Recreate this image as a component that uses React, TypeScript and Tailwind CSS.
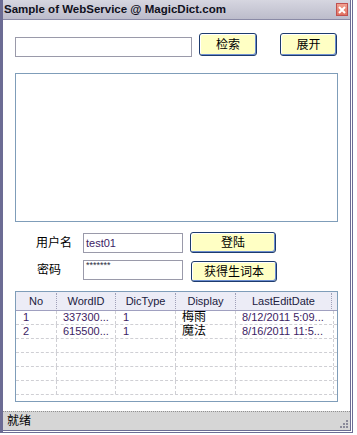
import React from 'react';

const font = { fontFamily: '"Liberation Sans", "Noto Sans CJK SC", sans-serif' };

const rows = [
  { no: '1', id: '337300...', type: '1', display: '梅雨', date: '8/12/2011 5:09...' },
  { no: '2', id: '615500...', type: '1', display: '魔法', date: '8/16/2011 11:5...' },
  null,
  null,
  null,
  null,
];

function XpButton({ children, className }: { children: React.ReactNode; className: string }) {
  return (
    <button
      className={`flex items-center justify-center rounded-[3px] border border-[#1d3b6e] bg-[#ffffc4] text-[12px] text-black shadow-[inset_-1px_-1px_0_#6f8fd0,inset_1px_1px_0_#ffffff] ${className}`}
    >
      {children}
    </button>
  );
}

export default function App() {
  return (
    <div className="h-[435px] w-[357px] bg-white" style={font}>
      <div className="flex h-[433px] w-[353px] flex-col border-b border-l-[3px] border-r border-[#6c6c94] pb-px pr-px">
        <div className="flex h-full flex-col border-b border-r border-[#6c6c94]">
          {/* title bar */}
          <div className="flex h-[20px] shrink-0 items-center justify-between border-b border-[#8a8aa6] bg-gradient-to-b from-[#d6d6e0] to-[#bcbccb] pr-[2px]">
            <span className="pl-[1px] text-[11.5px] font-bold leading-none text-[#101020]">
              Sample of WebService @ MagicDict.com
            </span>
            <div className="flex h-[13px] w-[12px] items-center justify-center border border-[#c05050] bg-gradient-to-b from-[#f0a090] to-[#e07060]">
              <svg width="8" height="8" viewBox="0 0 8 8">
                <path d="M1 1L7 7M7 1L1 7" stroke="white" strokeWidth="2" />
              </svg>
            </div>
          </div>

          {/* body */}
          <div className="flex flex-1 flex-col pl-[12px]">
            <div className="mt-[13px] flex items-start">
              <div className="mt-[4px] h-[20px] w-[177px] border border-[#9a9aaa] bg-white" />
              <XpButton className="ml-[7px] h-[23px] w-[58px]">检索</XpButton>
              <XpButton className="ml-[23px] h-[23px] w-[57px]">展开</XpButton>
            </div>

            <div className="mt-[16px] h-[149px] w-[323px] border border-[#7f9db9] bg-white" />

            <div className="mt-[10px] flex items-center">
              <span className="ml-[21px] w-[47px] text-[12px] leading-none text-black">用户名</span>
              <div className="h-[20px] w-[100px] border border-[#9a9aaa] pl-[2px] text-[11px] leading-[18px] text-[#3c1c64]">
                test01
              </div>
              <XpButton className="ml-[7px] h-[21px] w-[86px]">登陆</XpButton>
            </div>

            <div className="mt-[5px] flex items-center">
              <span className="ml-[22px] w-[46px] text-[12px] leading-none text-black">密码</span>
              <div className="h-[20px] w-[100px] border border-[#9a9aaa] pl-[2px] text-[9px] leading-[8px] text-[#2a2a40]">
                *******
              </div>
              <XpButton className="ml-[8px] mt-[3px] h-[21px] w-[86px]">获得生词本</XpButton>
            </div>

            {/* grid */}
            <div className="mt-[9px] flex h-[111px] w-[323px] flex-col border border-[#7f9db9] bg-white text-[11px]">
              <div className="flex h-[19px] shrink-0 items-center border-b border-[#a0a0c0] bg-[#ececf6] text-[#202040]">
                <div className="w-[41px] border-r border-dotted border-[#a0a0b8] text-center">No</div>
                <div className="w-[59px] border-r border-dotted border-[#a0a0b8] text-center">WordID</div>
                <div className="w-[60px] border-r border-dotted border-[#a0a0b8] text-center">DicType</div>
                <div className="w-[60px] border-r border-dotted border-[#a0a0b8] text-center">Display</div>
                <div className="w-[96px] border-r border-dotted border-[#a0a0b8] text-center">LastEditDate</div>
                <div className="flex-1" />
              </div>
              {rows.map((r, i) => (
                <div
                  key={i}
                  className="flex h-[14px] shrink-0 items-center border-b border-dashed border-[#cfcfd4] leading-[13px] text-[#3c1c64]"
                >
                  <div className="h-full w-[41px] border-r border-dashed border-[#cfcfd4] pl-[7px]">{r?.no}</div>
                  <div className="h-full w-[59px] border-r border-dashed border-[#cfcfd4] pl-[6px]">{r?.id}</div>
                  <div className="h-full w-[60px] border-r border-dashed border-[#cfcfd4] pl-[7px]">{r?.type}</div>
                  <div className="h-full w-[60px] border-r border-dashed border-[#cfcfd4] pl-[6px] text-[12px] text-black">
                    {r?.display}
                  </div>
                  <div className="h-full w-[98px] overflow-hidden whitespace-nowrap border-r border-dashed border-[#cfcfd4] pl-[6px]">
                    {r?.date}
                  </div>
                  <div className="flex-1" />
                </div>
              ))}
            </div>
          </div>

          {/* status bar */}
          <div className="relative flex h-[19px] shrink-0 items-center border-t border-dotted border-[#909090] bg-[#d6d6d6] pl-[4px] text-[12px] text-black">
            就绪
            <svg className="absolute bottom-[2px] right-[2px]" width="10" height="10" viewBox="0 0 10 10">
              <g fill="#8a8a9a">
                <rect x="8" y="2" width="2" height="2" />
                <rect x="5" y="5" width="2" height="2" />
                <rect x="8" y="5" width="2" height="2" />
                <rect x="2" y="8" width="2" height="2" />
                <rect x="5" y="8" width="2" height="2" />
                <rect x="8" y="8" width="2" height="2" />
              </g>
            </svg>
          </div>
        </div>
      </div>
    </div>
  );
}
